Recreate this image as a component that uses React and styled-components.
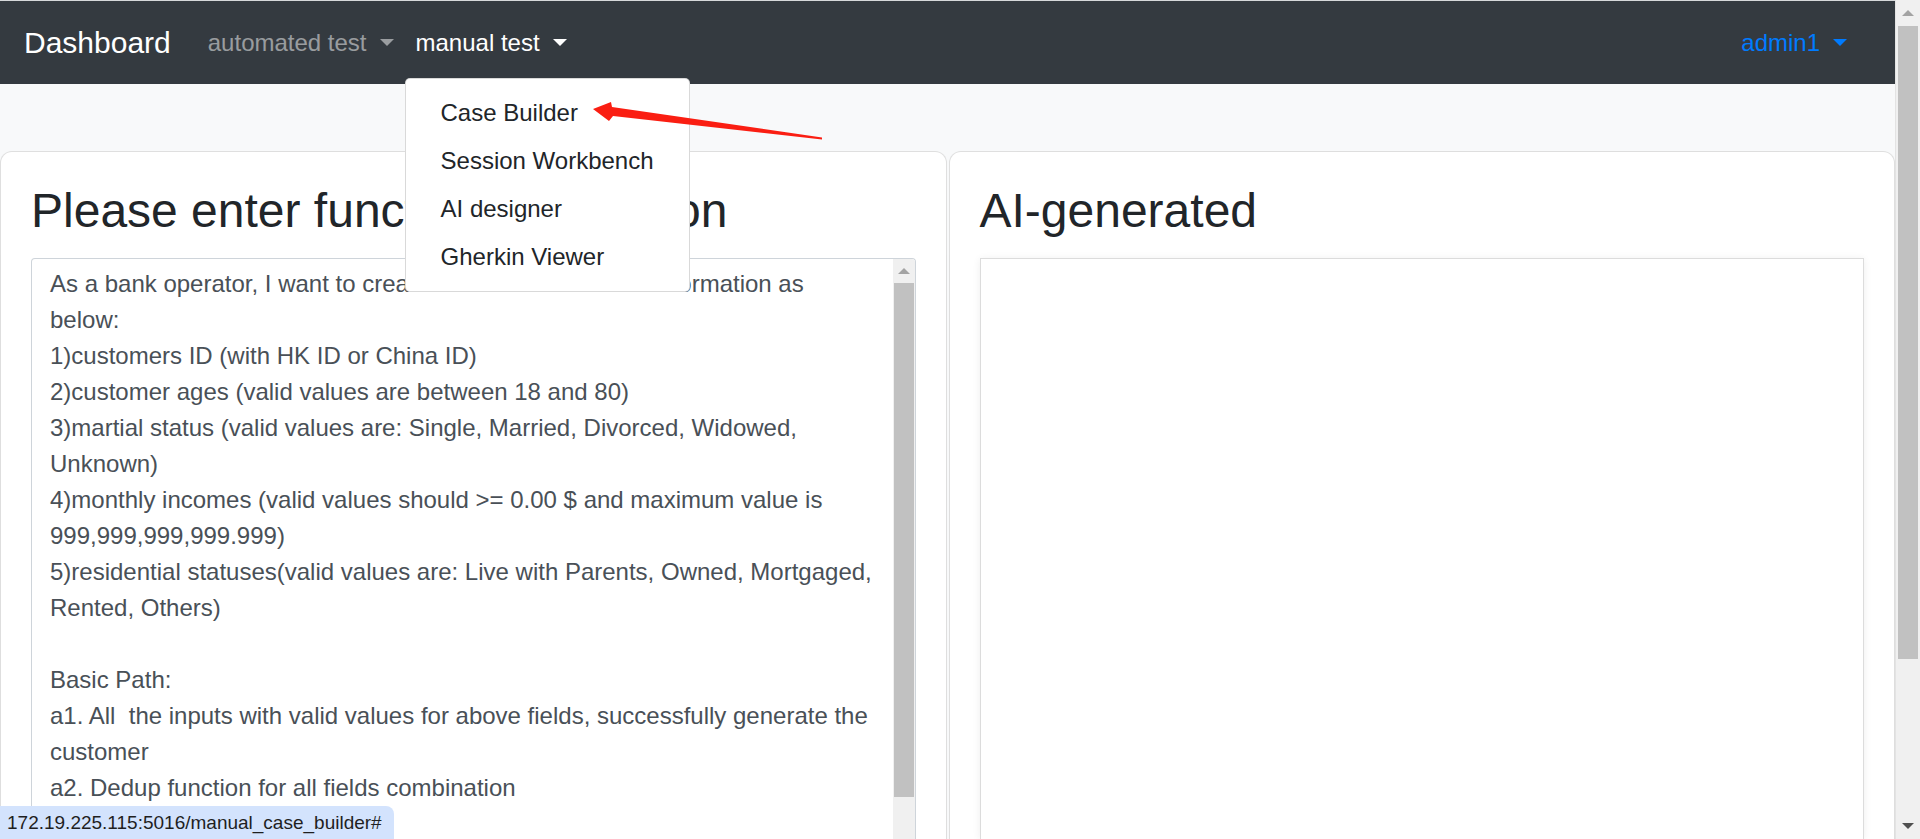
import styled, { createGlobalStyle } from 'styled-components';

const GlobalStyle = createGlobalStyle`
  html, body {
    margin: 0;
    padding: 0;
    height: 100%;
    overflow: hidden;
    font-family: "Liberation Sans", Arial, sans-serif;
  }
  #root {
    height: 100vh;
  }
  * {
    box-sizing: border-box;
  }
`;

const requirementLines = [
  'As a bank operator, I want to create new customers with information as',
  'below:',
  '1)customers ID (with HK ID or China ID)',
  '2)customer ages (valid values are between 18 and 80)',
  '3)martial status (valid values are: Single, Married, Divorced, Widowed,',
  'Unknown)',
  '4)monthly incomes (valid values should >= 0.00 $ and maximum value is',
  '999,999,999,999.999)',
  '5)residential statuses(valid values are: Live with Parents, Owned, Mortgaged,',
  'Rented, Others)',
  '',
  'Basic Path:',
  'a1. All  the inputs with valid values for above fields, successfully generate the',
  'customer',
  'a2. Dedup function for all fields combination',
  '',
];

const manualMenu = ['Case Builder', 'Session Workbench', 'AI designer', 'Gherkin Viewer'];

// ── Layout ──────────────────────────────────────────
const Screen = styled.div`
  display: flex;
  height: 100vh;
  overflow: hidden;
`;

const Page = styled.div`
  position: relative;
  flex: 1;
  min-width: 0;
  display: flex;
  flex-direction: column;
  background-color: #f8f9fa;
  overflow: hidden;
`;

// ── Navbar ──────────────────────────────────────────
const Navbar = styled.nav`
  height: 84px;
  flex-shrink: 0;
  display: flex;
  align-items: center;
  padding: 0 37px 0 24px;
  background-color: #343a40;
  border-top: 1px solid #d6d8da;
  z-index: 5;
`;

const Brand = styled.a`
  font-size: 30px;
  color: #fff;
  margin-right: 26px;
  line-height: 36px;
`;

const NavItem = styled.div`
  position: relative;
`;

const NavLink = styled.a`
  display: flex;
  align-items: center;
  padding: 0 11px;
  font-size: 24px;
  line-height: 36px;
  color: ${(p) => p.$color};
  cursor: pointer;
`;

const Caret = styled.span`
  display: inline-block;
  width: 0;
  height: 0;
  margin-left: 13px;
  border-top: 7px solid currentColor;
  border-left: 7px solid transparent;
  border-right: 7px solid transparent;
`;

const NavRight = styled.div`
  margin-left: auto;
`;

const Dropdown = styled.div`
  position: absolute;
  top: calc(100% + 17px);
  left: 0;
  width: 285px;
  padding: 10px 0;
  background-color: #fff;
  border: 1px solid rgba(0, 0, 0, 0.15);
  border-radius: 5px;
  z-index: 20;
`;

const DropdownItem = styled.a`
  display: block;
  padding: 6px 35px;
  font-size: 24px;
  line-height: 36px;
  color: #212529;
  white-space: nowrap;
`;

// ── Cards ───────────────────────────────────────────
const Content = styled.div`
  flex: 1;
  display: flex;
  gap: 2px;
  margin-top: 67px;
  min-height: 0;
`;

const Card = styled.section`
  flex: 1;
  min-width: 0;
  display: flex;
  flex-direction: column;
  padding: 30px 30px 0;
  background-color: #fff;
  border: 1px solid rgba(0, 0, 0, 0.125);
  border-bottom: none;
  border-radius: 12px 12px 0 0;
`;

const CardTitle = styled.h1`
  margin: 0 0 18px;
  font-size: 48px;
  font-weight: 400;
  line-height: 1.2;
  color: #212529;
  white-space: nowrap;
`;

const InputBox = styled.div`
  flex: 1;
  display: flex;
  border: 1px solid #ced4da;
  border-bottom: none;
  border-radius: 4px 4px 0 0;
  overflow: hidden;
`;

const InputText = styled.div`
  flex: 1;
  min-width: 0;
  padding: 7px 18px;
  font-size: 24px;
  line-height: 36px;
  color: #495057;
  white-space: pre;
  overflow: hidden;
`;

const OutputBox = styled.div`
  flex: 1;
  border: 1px solid #dcdcdc;
  border-bottom: none;
  background-color: #fff;
  box-shadow: 0 1px 8px rgba(0, 0, 0, 0.07);
`;

// ── Scrollbars ──────────────────────────────────────
const ScrollTrack = styled.div`
  width: ${(p) => p.$width}px;
  flex-shrink: 0;
  display: flex;
  flex-direction: column;
  background-color: #f0f0f0;
  border-left: ${(p) => (p.$edge ? '1px solid #e3e3e3' : 'none')};
`;

const ScrollArrowZone = styled.div`
  height: ${(p) => p.$height}px;
  flex-shrink: 0;
  display: flex;
  align-items: center;
  justify-content: center;
`;

const TriangleUp = styled.span`
  width: 0;
  height: 0;
  border-left: 6px solid transparent;
  border-right: 6px solid transparent;
  border-bottom: 6px solid ${(p) => p.$color};
`;

const TriangleDown = styled.span`
  width: 0;
  height: 0;
  border-left: 6px solid transparent;
  border-right: 6px solid transparent;
  border-top: 6px solid ${(p) => p.$color};
`;

const ScrollThumb = styled.div`
  height: ${(p) => p.$height}px;
  flex-shrink: 0;
  margin: ${(p) => p.$margin};
  background-color: #c1c1c1;
`;

const ScrollFill = styled.div`
  flex: 1;
`;

// ── Overlays ────────────────────────────────────────
const Annotation = styled.svg`
  position: absolute;
  left: 585px;
  top: 95px;
  width: 245px;
  height: 50px;
  z-index: 30;
  pointer-events: none;
`;

const StatusBubble = styled.div`
  position: absolute;
  left: 0;
  bottom: 0;
  height: 33px;
  padding: 0 12px 0 7px;
  font-size: 19px;
  line-height: 33px;
  color: #1f1f1f;
  background-color: #d3e3fd;
  border-top-right-radius: 8px;
  z-index: 40;
`;

const App = () => (
  <>
    <GlobalStyle />
    <Screen>
      <Page>
        <Navbar>
          <Brand>Dashboard</Brand>
          <NavItem>
            <NavLink $color="rgba(255,255,255,0.5)">
              automated test<Caret />
            </NavLink>
          </NavItem>
          <NavItem>
            <NavLink $color="#fff">
              manual test<Caret />
            </NavLink>
            <Dropdown>
              {manualMenu.map((label) => (
                <DropdownItem key={label}>{label}</DropdownItem>
              ))}
            </Dropdown>
          </NavItem>
          <NavRight>
            <NavLink $color="#007bff">
              admin1<Caret />
            </NavLink>
          </NavRight>
        </Navbar>

        <Content>
          <Card>
            <CardTitle>Please enter function description</CardTitle>
            <InputBox>
              <InputText>{requirementLines.join('\n')}</InputText>
              <ScrollTrack $width={22}>
                <ScrollArrowZone $height={24}>
                  <TriangleUp $color="#a3a3a3" />
                </ScrollArrowZone>
                <ScrollThumb $height={514} $margin="0 1px" />
                <ScrollFill />
              </ScrollTrack>
            </InputBox>
          </Card>
          <Card>
            <CardTitle>AI-generated</CardTitle>
            <OutputBox />
          </Card>
        </Content>

        <Annotation viewBox="0 0 245 50">
          <polygon
            points="8,14 26,7 27,12 237,42.5 237,44.5 28,21 24,26"
            fill="#fa1e12"
          />
        </Annotation>

        <StatusBubble>172.19.225.115:5016/manual_case_builder#</StatusBubble>
      </Page>

      <ScrollTrack $width={25} $edge>
        <ScrollArrowZone $height={26}>
          <TriangleUp $color="#a3a3a3" />
        </ScrollArrowZone>
        <ScrollThumb $height={633} $margin="0 2px 0 2px" />
        <ScrollFill />
        <ScrollArrowZone $height={26}>
          <TriangleDown $color="#505050" />
        </ScrollArrowZone>
      </ScrollTrack>
    </Screen>
  </>
);

export default App;
